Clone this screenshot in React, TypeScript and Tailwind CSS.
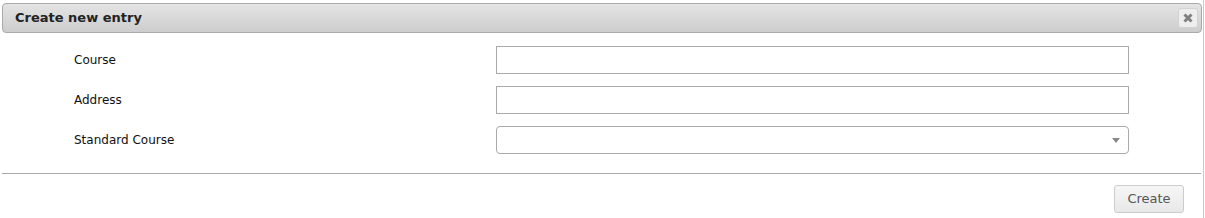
export default function App() {
    const fields = ['Course', 'Address'];

    return (
        <div className="relative w-[1205px] h-[218px] bg-white font-['DejaVu_Sans',Verdana,sans-serif] overflow-hidden">
            {/* right edge of the dialog */}
            <div className="absolute right-[1px] top-0 bottom-0 w-px bg-[#c8c8c8]" />

            <div className="pt-[3px] pl-[2px] pr-[3px]">
                <div className="h-[30px] flex items-center justify-between rounded-[4px] border border-[#aaaaaa] bg-gradient-to-b from-[#e4e4e4] to-[#cdcdcd] pl-[12px] pr-[3px]">
                    <span className="text-[13px] font-bold text-[#222222]">Create new entry</span>
                    <button className="w-[20px] h-[20px] flex items-center justify-center rounded-[3px] border border-[#d3d3d3] bg-[#eeeeee]">
                        <svg width="12" height="12" viewBox="0 0 12 12">
                            <path d="M2.5 2.5 L9.5 9.5 M9.5 2.5 L2.5 9.5" stroke="#808080" strokeWidth="3" strokeLinecap="butt" />
                        </svg>
                    </button>
                </div>
            </div>

            <div className="pt-[13px] pl-[74px] flex flex-col gap-[12px]">
                {fields.map(f => (
                    <div key={f} className="flex items-center">
                        <label className="w-[422px] text-[12px] text-[#111111]">{f}</label>
                        <input type="text" className="w-[633px] h-[28px] border border-[#aaaaaa] bg-white outline-none" />
                    </div>
                ))}
                <div className="flex items-center">
                    <label className="w-[422px] text-[12px] text-[#111111]">Standard Course</label>
                    <div className="w-[633px] h-[28px] border border-[#aaaaaa] rounded-[4px] bg-white flex items-center justify-end pr-[8px]">
                        <svg width="8" height="5" viewBox="0 0 8 5">
                            <path d="M0 0 L8 0 L4 5 Z" fill="#888888" />
                        </svg>
                    </div>
                </div>
            </div>

            <div className="mt-[19px] ml-[2px] mr-[4px] h-px bg-[#aaaaaa]" />

            <div className="flex justify-end pr-[21px] pt-[11px]">
                <button className="w-[70px] h-[28px] rounded-[3px] border border-[#cccccc] bg-gradient-to-b from-[#f6f6f6] to-[#e8e8e8] text-[13px] text-[#555555]">
                    Create
                </button>
            </div>
        </div>
    );
}
